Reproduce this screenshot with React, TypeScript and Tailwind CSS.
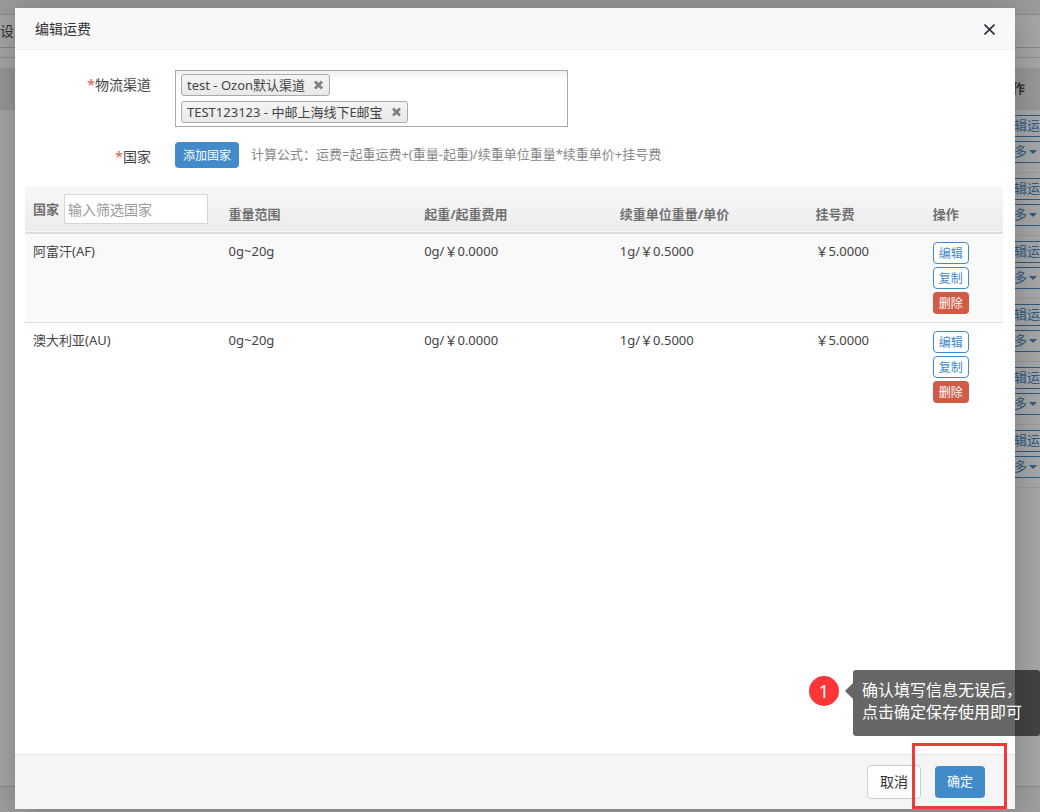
import React from "react";

const channels = ["test - Ozon默认渠道", "TEST123123 - 中邮上海线下E邮宝"];

const rates = [
  {
    country: "阿富汗(AF)",
    range: "0g~20g",
    first: "0g/￥0.0000",
    next: "1g/￥0.5000",
    fee: "￥5.0000",
  },
  {
    country: "澳大利亚(AU)",
    range: "0g~20g",
    first: "0g/￥0.0000",
    next: "1g/￥0.5000",
    fee: "￥5.0000",
  },
];

function BackgroundPage() {
  return (
    <div
      aria-hidden="true"
      className="flex h-screen flex-col overflow-hidden bg-[#a6a6a6] text-[#333]"
    >
      <div className="h-[14px] shrink-0 bg-[#9c9c9c]" />
      <div className="flex h-[34px] shrink-0 items-center border-y border-[#878787] text-sm">
        设置
      </div>
      <div className="h-[10px] shrink-0 border-b border-[#8c8c8c]" />
      <div className="mt-[10px] flex h-[42px] shrink-0 items-center justify-end bg-[#979797] pr-[15px] text-[13px] font-bold">
        操作
      </div>
      <div className="flex flex-1 flex-col items-end overflow-hidden">
        {[0, 1, 2, 3, 4, 5].map((row) => (
          <div
            key={row}
            className="flex h-[63px] w-[60px] shrink-0 flex-col gap-1 border-b border-[#999] pt-[5px] text-[13px] text-[#2b5a82]"
          >
            <div className="flex h-[22px] items-center justify-end border-y border-[#2b5a82]">
              编辑运
            </div>
            <div className="flex h-[22px] items-center justify-end gap-[2px] border-y border-[#2b5a82] pr-[3px]">
              更多
              <span className="border-x-4 border-t-4 border-x-transparent border-t-[#2b5a82]" />
            </div>
          </div>
        ))}
      </div>
      <div className="h-[26px] shrink-0 border-t border-[#8c8c8c] bg-[#9e9e9e] pt-[10px] pl-[66px] text-[13px] leading-[15px]">
        30
      </div>
    </div>
  );
}

function ChannelTag({ name }: { name: string }) {
  return (
    <li className="flex h-[22px] items-center gap-2 rounded-[3px] border border-[#aaa] bg-linear-to-b from-[#f4f4f4] to-[#e9e9e9] px-[5px] text-[13px] leading-5 text-[#444]">
      {name}
      <button type="button" aria-label={`移除 ${name}`} className="cursor-pointer">
        <svg width="11" height="10" viewBox="0 0 11 10">
          <path d="M2 1.5 9 8.5M9 1.5 2 8.5" stroke="#808080" strokeWidth="2.8" />
        </svg>
      </button>
    </li>
  );
}

function RateActions() {
  return (
    <div className="flex w-9 flex-col gap-[3px] text-xs">
      <button type="button" className="h-[22px] rounded border border-[#428bca] bg-white pt-[2px] text-[#428bca]">
        编辑
      </button>
      <button type="button" className="h-[22px] rounded border border-[#428bca] bg-white pt-[2px] text-[#428bca]">
        复制
      </button>
      <button type="button" className="h-[22px] rounded bg-[#d15b47] pt-[2px] text-white">
        删除
      </button>
    </div>
  );
}

function RateTable() {
  return (
    <table className="w-full table-fixed border-collapse text-left text-[13px] leading-[18px] text-[#444]">
      <thead>
        <tr className="border-b-2 border-[#ddd] bg-linear-to-b from-[#f8f8f8] to-[#ececec] align-bottom leading-5 text-[#707070]">
          <th className="w-1/5 p-2">
            <label className="flex items-center gap-[5px]">
              <span className="shrink-0">国家</span>
              <input
                type="text"
                placeholder="输入筛选国家"
                className="h-[30px] w-36 border border-[#d5d5d5] bg-white px-[3px] text-sm font-normal placeholder:text-[#999]"
              />
            </label>
          </th>
          <th className="w-1/5 p-2">重量范围</th>
          <th className="w-1/5 p-2">起重/起重费用</th>
          <th className="w-1/5 p-2">续重单位重量/单价</th>
          <th className="w-[12%] p-2">挂号费</th>
          <th className="w-[8%] p-2">操作</th>
        </tr>
      </thead>
      <tbody>
        {rates.map((rate) => (
          <tr
            key={rate.country}
            className="border-b border-[#ddd] align-top odd:bg-[#f9f9f9] last:border-b-0"
          >
            <td className="p-2">{rate.country}</td>
            <td className="p-2">{rate.range}</td>
            <td className="p-2">{rate.first}</td>
            <td className="p-2">{rate.next}</td>
            <td className="p-2">{rate.fee}</td>
            <td className="p-2">
              <RateActions />
            </td>
          </tr>
        ))}
      </tbody>
    </table>
  );
}

function ConfirmHint() {
  return (
    <div className="absolute -right-[25px] bottom-[73px] flex items-start">
      <span className="mt-[6px] flex size-[30px] items-center justify-center rounded-full bg-[#fc3538] text-lg text-white">
        1
      </span>
      <span className="mt-[13px] ml-[6px] border-y-8 border-r-8 border-y-transparent border-r-[#666]" />
      <p className="h-[66px] w-[187px] rounded-[3px] bg-black/60 px-[9px] pt-[9px] text-base leading-[22px] text-white">
        确认填写信息无误后，
        <br />
        点击确定保存使用即可
      </p>
    </div>
  );
}

export default function App() {
  return (
    <div className="relative font-['Noto_Sans','Noto_Sans_CJK_SC',sans-serif]">
      <BackgroundPage />

      <div className="absolute inset-0 flex overflow-hidden pt-2 pr-[25px] pb-[3px] pl-[15px]">
        <div
          role="dialog"
          aria-labelledby="dialog-title"
          className="relative flex flex-1 flex-col bg-white shadow-[0_0_30px_rgba(0,0,0,0.25)]"
        >
          <header className="flex h-[42px] shrink-0 items-center justify-between border-b border-[#eee] bg-[#f8f8f8] px-5">
            <h1 id="dialog-title" className="text-sm text-[#333]">
              编辑运费
            </h1>
            <button type="button" aria-label="关闭" className="pt-[2px]">
              <svg width="11" height="11" viewBox="0 0 11 11">
                <path d="M0.5 0.5 10.5 10.5M10.5 0.5 0.5 10.5" stroke="#2e2d3c" strokeWidth="1.6" />
              </svg>
            </button>
          </header>

          <main className="flex-1 overflow-auto pt-5">
            <div className="flex items-start gap-6">
              <span className="w-[136px] shrink-0 pt-[5px] text-right text-sm leading-5 text-[#444]">
                <span className="text-[#dd5a43]">*</span>物流渠道
              </span>
              <ul
                aria-label="物流渠道"
                className="flex w-full max-w-[393px] flex-col items-start gap-[5px] border border-[#aaa] bg-linear-to-b from-[#eee] to-white to-15% px-[5px] py-[3px]"
              >
                {channels.map((name) => (
                  <ChannelTag key={name} name={name} />
                ))}
              </ul>
            </div>

            <div className="mt-[15px] flex items-start gap-6">
              <span className="w-[136px] shrink-0 pt-[5px] text-right text-sm leading-5 text-[#444]">
                <span className="text-[#dd5a43]">*</span>国家
              </span>
              <div className="flex items-start gap-3">
                <button
                  type="button"
                  className="h-[26px] w-16 rounded bg-[#428bca] pt-[2px] text-xs text-white"
                >
                  添加国家
                </button>
                <p className="pt-[2px] text-[13px] leading-5 text-[#888]">
                  计算公式：运费=起重运费+(重量-起重)/续重单位重量*续重单价+挂号费
                </p>
              </div>
            </div>

            <div className="mt-[18px] pr-3 pl-[10px]">
              <RateTable />
            </div>
          </main>

          <footer className="flex h-[55px] shrink-0 items-center justify-end gap-[14px] border-t border-[#e5e5e5] bg-[#f5f5f5] pr-[30px]">
            <button
              type="button"
              className="h-[34px] w-[54px] rounded border border-[#ccc] bg-white text-sm text-[#333]"
            >
              取消
            </button>
            <button
              type="button"
              className="h-8 w-[50px] rounded bg-[#428bca] text-[13px] text-white"
            >
              确定
            </button>
          </footer>

          <ConfirmHint />
          <div className="pointer-events-none absolute right-2 bottom-0 h-[66px] w-[95px] border-3 border-[#ef3b38]" />
        </div>
      </div>
    </div>
  );
}
